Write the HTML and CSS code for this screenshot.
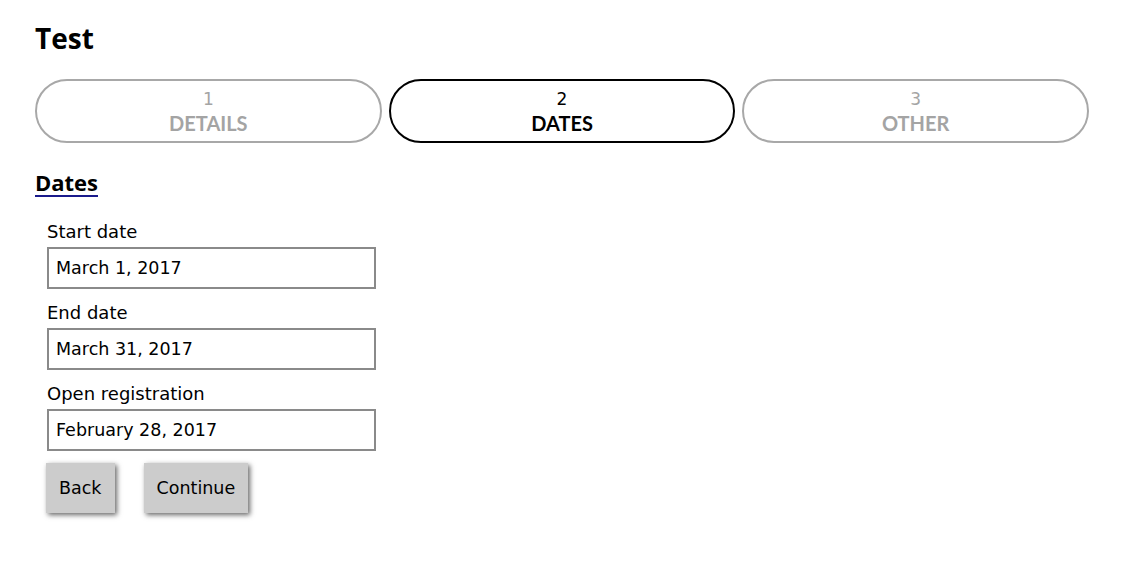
FILE: index.html
```html
<!DOCTYPE html>
<html>
<head>
<meta charset="utf-8">
<link rel="stylesheet" href="styles.css">
</head>
<body>
<div class="page">
  <h1 class="title">Test</h1>
  <div class="steps">
    <div class="step"><span class="num">1</span><span class="lbl">DETAILS</span></div>
    <div class="step active"><span class="num">2</span><span class="lbl">DATES</span></div>
    <div class="step"><span class="num">3</span><span class="lbl">OTHER</span></div>
  </div>
  <h2 class="section">Dates</h2>
  <form class="form">
    <div class="field">
      <label class="label">Start date</label>
      <input class="input" type="text" value="March 1, 2017">
    </div>
    <div class="field">
      <label class="label">End date</label>
      <input class="input" type="text" value="March 31, 2017">
    </div>
    <div class="field">
      <label class="label">Open registration</label>
      <input class="input" type="text" value="February 28, 2017">
    </div>
    <div class="actions">
      <button class="btn" type="button">Back</button>
      <button class="btn" type="button">Continue</button>
    </div>
  </form>
</div>
</body>
</html>
```
FILE: styles.css
```css
html, body {
  margin: 0;
  padding: 0;
  background: #fff;
}
body {
  font-family: "DejaVu Sans", "Open Sans", sans-serif;
  color: #000;
}
.page {
  padding: 20px 47px 40px 35px;
}
.title {
  margin: 0;
  font-family: "Open Sans", sans-serif;
  font-size: 28px;
  font-weight: 700;
  line-height: 36px;
}
.steps {
  display: flex;
  gap: 7px;
  margin-top: 23px;
  width: 1054px;
}
.step {
  flex: 1;
  height: 64px;
  box-sizing: border-box;
  border: 2px solid #a8a8a8;
  border-radius: 32px;
  display: flex;
  flex-direction: column;
  align-items: center;
  justify-content: center;
  color: #a4a4a4;
}
.step.active {
  border-color: #000;
  color: #000;
}
.num {
  font-size: 17px;
  line-height: 23px;
}
.lbl {
  font-family: Lato, "Open Sans", sans-serif;
  font-weight: 700;
  font-size: 20px;
  line-height: 24px;
}
.section {
  display: inline-block;
  margin: 27px 0 0 0;
  font-family: "Open Sans", sans-serif;
  font-size: 22px;
  font-weight: 700;
  line-height: 24px;
  padding-bottom: 1px;
  border-bottom: 2px solid #1a1a8c;
}
.form {
  padding-left: 11px;
  margin-top: 23px;
  padding-bottom: 20px;
}
.field {
  display: flex;
  flex-direction: column;
  margin-bottom: 12px;
  padding-left: 1px;
}
.label {
  font-size: 18px;
  line-height: 24px;
  margin-bottom: 3px;
}
.input {
  width: 329px;
  height: 42px;
  box-sizing: border-box;
  border: 2px solid #8a8a8a;
  padding: 0 7px;
  font-family: "DejaVu Sans", sans-serif;
  font-size: 17.5px;
  color: #000;
  outline: none;
}
.actions {
  display: flex;
  gap: 29px;
  margin-top: 2px;
}
.btn {
  height: 50px;
  padding: 0 13px;
  background: #cccccc;
  border: none;
  font-family: "DejaVu Sans", sans-serif;
  font-size: 17.5px;
  color: #000;
  box-shadow: 2px 2px 5px rgba(0,0,0,0.6);
}
```
